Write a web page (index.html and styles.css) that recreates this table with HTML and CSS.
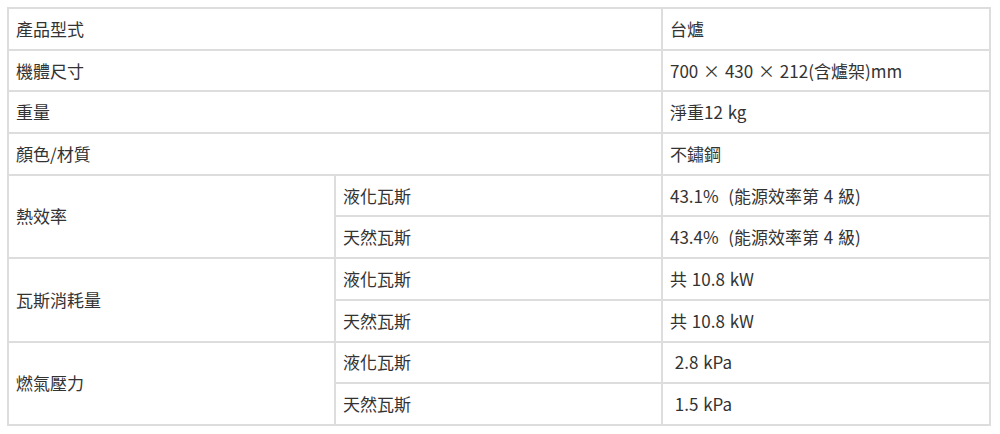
FILE: index.html
```html
<!DOCTYPE html>
<html lang="zh-Hant">
<head>
<meta charset="utf-8">
<link rel="stylesheet" href="styles.css">
</head>
<body>
<table class="spec">
  <colgroup>
    <col class="c1"><col class="c2"><col class="c3">
  </colgroup>
  <tbody>
    <tr><td colspan="2">產品型式</td><td>台爐</td></tr>
    <tr><td colspan="2">機體尺寸</td><td>700 × 430 × 212(含爐架)mm</td></tr>
    <tr><td colspan="2">重量</td><td>淨重12 kg</td></tr>
    <tr><td colspan="2">顏色/材質</td><td>不鏽鋼</td></tr>
    <tr><td rowspan="2">熱效率</td><td>液化瓦斯</td><td>43.1%&nbsp; (能源效率第 4 級)</td></tr>
    <tr><td>天然瓦斯</td><td>43.4%&nbsp; (能源效率第 4 級)</td></tr>
    <tr><td rowspan="2">瓦斯消耗量</td><td>液化瓦斯</td><td>共 10.8 kW</td></tr>
    <tr><td>天然瓦斯</td><td>共 10.8 kW</td></tr>
    <tr><td rowspan="2">燃氣壓力</td><td>液化瓦斯</td><td>&nbsp;2.8 kPa</td></tr>
    <tr><td>天然瓦斯</td><td>&nbsp;1.5 kPa</td></tr>
  </tbody>
</table>
</body>
</html>
```
FILE: styles.css
```css
html, body {
  margin: 0;
  padding: 0;
  background: #ffffff;
}
body {
  padding: 7px;
  font-family: "Noto Sans CJK TC", "Noto Sans", sans-serif;
  font-size: 17px;
  color: #333333;
}
.spec {
  border-collapse: separate;
  border-spacing: 0;
  table-layout: fixed;
  width: 984px;
  border-top: 2px solid #dddddd;
  border-left: 2px solid #dddddd;
}
.c1 { width: 327px; }
.c2 { width: 327px; }
.c3 { width: 328px; }
.spec td {
  box-sizing: border-box;
  height: 41.7px;
  padding: 0 7px;
  border-right: 2px solid #dddddd;
  border-bottom: 2px solid #dddddd;
  vertical-align: middle;
  line-height: 20px;
  white-space: nowrap;
  word-spacing: 1px;
}
```
